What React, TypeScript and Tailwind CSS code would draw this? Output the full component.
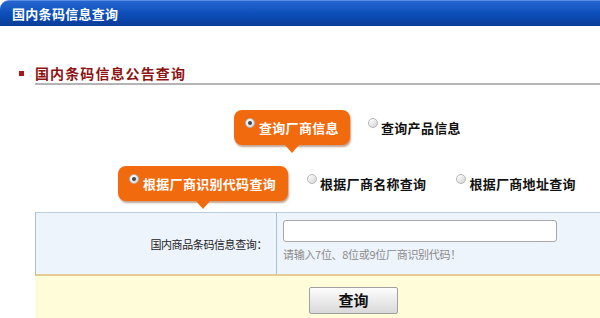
import type { ReactNode } from "react";

const font = "font-['Noto_Sans_CJK_SC','Liberation_Sans',sans-serif]";

const Radio = ({ checked = false }: { checked?: boolean }) => (
  <span className="flex h-[10px] w-[10px] shrink-0 items-center justify-center rounded-full border border-[#b5b5b5] bg-gradient-to-br from-[#ffffff] to-[#d6d6d6]">
    {checked && <span className="h-[4px] w-[4px] rounded-full bg-[#3a4a5a]" />}
  </span>
);

const Bubble = ({ width, children }: { width: string; children: ReactNode }) => (
  <div
    className={`relative flex h-[35px] items-start rounded-[8px] bg-[#f26a0e] pl-[11px] pt-[8px] shadow-[1px_2px_2px_rgba(120,50,0,0.45)] ${width}`}
  >
    <Radio checked />
    <span className="ml-[4px] text-[13px] font-bold leading-[20px] tracking-[0.3px] text-white">
      {children}
    </span>
    <span className="absolute -bottom-[8px] left-1/2 h-0 w-0 -translate-x-1/2 border-x-[7px] border-t-[8px] border-x-transparent border-t-[#f26a0e]" />
  </div>
);

const Option = ({ label, className = "" }: { label: string; className?: string }) => (
  <div className={`flex items-start pt-[8px] ${className}`}>
    <Radio />
    <span className="ml-[3px] text-[13px] font-bold leading-[20px] tracking-[0.3px] text-[#111]">
      {label}
    </span>
  </div>
);

export default function App() {
  return (
    <div className={`h-[318px] w-[600px] overflow-hidden bg-white ${font}`}>
      <div className="flex h-[26px] items-center rounded-tl-[9px] border-t border-[#5a8ee0] bg-gradient-to-b from-[#2666d0] via-[#0c4fba] to-[#0a3c98] pl-[12px]">
        <span className="text-[13px] font-bold tracking-[0.3px] text-white">国内条码信息查询</span>
      </div>

      <div className="mt-[37px] flex pl-[19px]">
        <span className="mt-[8px] h-[5px] w-[5px] bg-[#a81818]" />
        <div className="ml-[11px] flex-1 border-b-2 border-[#b4b4b4] text-[14px] font-bold leading-[20px] tracking-[1.1px] text-[#8c1414]">
          国内条码信息公告查询
        </div>
      </div>

      <div className="mt-[25px] flex pl-[234px]">
        <Bubble width="w-[116px]">查询厂商信息</Bubble>
        <Option label="查询产品信息" className="ml-[18px]" />
      </div>

      <div className="mt-[21px] flex pl-[118px]">
        <Bubble width="w-[170px]">根据厂商识别代码查询</Bubble>
        <Option label="根据厂商名称查询" className="ml-[19px]" />
        <Option label="根据厂商地址查询" className="ml-[30px]" />
      </div>

      <div className="ml-[35px] mt-[11px]">
        <div className="flex h-[64px] border-l border-t border-b-2 border-l-[#a9bfd2] border-t-[#b9cee0] border-b-[#e4cd8e] bg-[#eef4fc]">
          <div className="flex w-[241px] items-center justify-end border-r border-[#a9bfd2] pr-[9px] pt-[2px] text-[11px] tracking-[-0.4px] text-[#222]">
            国内商品条码信息查询：
          </div>
          <div className="flex flex-col pl-[6px] pt-[7px]">
            <input
              type="text"
              className="h-[22px] w-[274px] rounded-[3px] border border-[#a8a8a8] bg-white px-1 text-[12px] outline-none"
            />
            <span className="mt-[5px] text-[11px] leading-[14px] tracking-[-0.3px] text-[#8a8a8a]">
              请输入7位、8位或9位厂商识别代码！
            </span>
          </div>
        </div>
        <div className="flex h-[42px] items-start bg-[#fffdd9] pl-[274px] pt-[11px]">
          <button
            type="button"
            className="flex h-[27px] w-[89px] items-center justify-center rounded-[2px] border border-[#a0a0a0] bg-gradient-to-b from-[#fdfdfd] to-[#d9d9d9] text-[15px] font-bold text-[#111]"
          >
            查询
          </button>
        </div>
      </div>
    </div>
  );
}
